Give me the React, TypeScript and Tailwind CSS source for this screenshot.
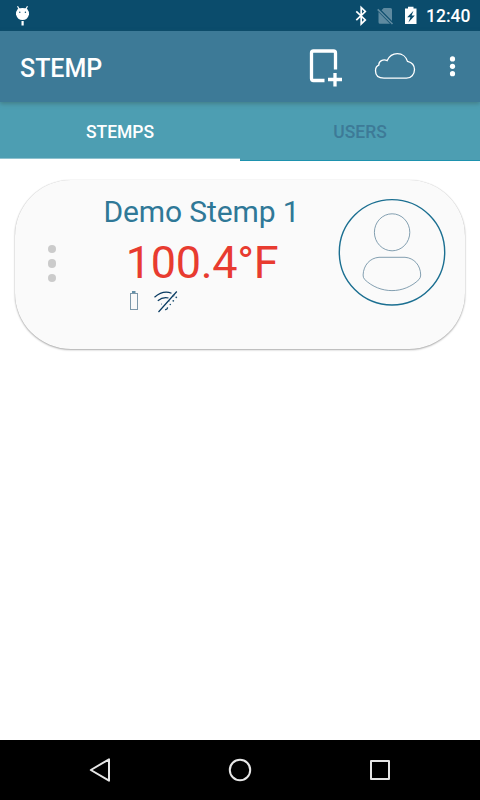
import React from "react";

function StatusBar() {
  return (
    <div className="flex h-[31px] items-center bg-[#0b4c6c]">
      <svg className="ml-[15px]" width="15" height="31" viewBox="15 0 15 31" fill="#fff">
        <path d="M17.500 6.300l1.800 3M27.500 6.300l-1.800 3" stroke="#fff" strokeWidth="1.200" />
        <path d="M18 8.600q4.500-1.300 9 0q2.300 3 2 6q-1.500 5.500-6.500 5.500t-6.500-5.500q-.3-3 2-6z" />
        <rect x="21.500" y="21" width="2.200" height="4.500" />
        <circle cx="19.800" cy="12.300" r=".7" fill="#0b4c6c" />
        <circle cx="25.400" cy="12.300" r=".7" fill="#0b4c6c" />
      </svg>
      <svg className="ml-auto" width="80" height="31" viewBox="350 0 80 31" fill="none">
        <path d="M356.300 11.300l9 8.600-4.100 4V7.500l4.100 4-9 8.600" stroke="#fff" strokeWidth="1.700" />
        <path d="M381.500 10.200L383.700 8H390.500q1.500 0 1.500 1.500V21zM378.500 12L390 23.700H380q-1.500 0-1.500-1.500z" fill="#5e8aa0" />
        <path d="M377.700 9.300l14.800 14.700" stroke="#5e8aa0" strokeWidth="1.700" />
        <path d="M405 8.500h3V6.700h5.500v1.800h3V24H405z" fill="#fff" />
        <path d="M413.500 10.800l-6.300 6.400h3.200l-2 5.300 6.400-7h-3.200z" fill="#0b4c6c" />
      </svg>
      <span className="-ml-[4px] w-[54px] whitespace-nowrap pt-[2px] text-[17.5px] font-medium leading-[31px] text-white">12:40</span>
    </div>
  );
}

function AppBar() {
  return (
    <header className="relative z-10 flex h-[71px] items-center bg-[#3d7a97] pl-5 shadow-[0_2px_4px_rgba(60,100,100,0.5)]">
      <h1 className="pt-[3px] text-[25px] font-medium leading-none text-white">STEMP</h1>
      <svg className="ml-auto" width="180" height="71" viewBox="300 31 180 71" fill="none">
        <path d="M324.500 80.500H313.500q-2 0-2-2V53q0-2 2-2H333.500q2 0 2 2V69.500" stroke="#fff" strokeWidth="3.300" />
        <path d="M335 73v13.500M328 79.500h14" stroke="#fff" strokeWidth="3.300" />
        <path d="M384 78.200C378.500 78.200 375.500 75.200 375.500 70.800C375.500 67.600 376.800 65.900 378.800 65.100C378.700 61.200 383 58.700 387.200 60.600C389.300 56 393 53.700 397.300 53.700C402.400 53.700 406.300 57 407.500 61.400C412 62.500 414.500 65.700 414.500 69.600C414.500 74.500 411 78.200 406.500 78.200Z" stroke="#fff" strokeWidth="1.300" />
        <g fill="#fff">
          <circle cx="452.500" cy="58.900" r="2.600" />
          <circle cx="452.500" cy="66.300" r="2.600" />
          <circle cx="452.500" cy="73.700" r="2.600" />
        </g>
      </svg>
    </header>
  );
}

function Tabs() {
  return (
    <nav className="flex h-[59px] text-center text-[17.5px] font-medium leading-[60px]">
      <div className="h-[57px] flex-1 border-b border-[#8fc1ce] bg-[#4d9eb2] text-white">STEMPS</div>
      <div className="h-[59px] flex-1 border-b border-[#1e92ae] bg-[#4d9eb2] text-[#3d7a97]">USERS</div>
    </nav>
  );
}

function Avatar() {
  return (
    <svg width="108" height="108" viewBox="338 198 108 108" fill="none">
      <circle cx="392" cy="252.300" r="52.700" stroke="#1b6f91" strokeWidth="1.400" />
      <g stroke="#64889d" strokeWidth=".8">
        <ellipse cx="392.100" cy="232.300" rx="17.700" ry="18.500" />
        <path d="M379 257.300H405C414 258 420.500 265 420.700 275Q420.700 277.500 419 279.500C404 294.300 380 294.300 364.700 279.500Q363 277.500 363.100 275C363.500 265 370 258 379 257.300Z" />
      </g>
    </svg>
  );
}

function StatusIcons() {
  return (
    <svg width="54" height="24" viewBox="126 290 54 24" fill="none">
      <path d="M132 292h3.500" stroke="#316d8c" strokeWidth="1.500" />
      <rect x="130.500" y="293.500" width="7" height="16" stroke="#7d98aa" strokeWidth="1" />
      <g stroke="#083a61" strokeWidth="1.200">
        <path d="M154.500 297.300Q163 289.800 171.500 293.200M157.800 300.800Q163 296.500 168.500 298M176.800 291.500L158.500 312" />
      </g>
      <g fill="#245475">
        <circle cx="176.300" cy="297.300" r=".9" />
        <circle cx="173.500" cy="295.500" r=".9" />
        <circle cx="173.300" cy="300.800" r=".9" />
        <circle cx="170.300" cy="304.500" r=".8" />
        <circle cx="169" cy="301" r=".6" />
        <circle cx="161.500" cy="304" r=".5" />
      </g>
      <path d="M165 309.500q2.600.3 2.500-2.300" stroke="#245475" strokeWidth="1.300" />
    </svg>
  );
}

function StempCard() {
  return (
    <section className="mx-[15px] mt-[19px] flex h-[169px] rounded-[56px] bg-[#fafafa] shadow-[0_1px_2px_rgba(0,0,0,0.32),0_0_1px_rgba(0,0,0,0.2)]">
      <div className="ml-[32.5px] mt-[64.5px] flex w-[9px] shrink-0 flex-col gap-[6px]">
        <i className="h-[8.5px] w-[8.5px] rounded-full bg-[#cbcbcb]" />
        <i className="h-[8.5px] w-[8.5px] rounded-full bg-[#cbcbcb]" />
        <i className="h-[8.5px] w-[8.5px] rounded-full bg-[#cbcbcb]" />
      </div>
      <div className="ml-[31.5px] flex w-[226px] flex-col whitespace-nowrap">
        <div className="mt-[14px] pl-[1px] text-center text-[30px] leading-[36px] tracking-[-0.1px] text-[#2f7897]">Demo Stemp 1</div>
        <div className="mt-[6px] pl-[2px] text-center text-[45px] leading-[54px] tracking-[-0.3px] text-[#e83b30]">100.4°F</div>
        <div className="ml-[38px]"><StatusIcons /></div>
      </div>
      <div className="ml-[24px] mt-[18px]"><Avatar /></div>
    </section>
  );
}

function NavBar() {
  return (
    <footer className="h-[60px] bg-black">
      <svg width="480" height="60" viewBox="0 740 480 60" fill="none" stroke="#e6e6e6" strokeWidth="2" strokeLinejoin="round">
        <path d="M90.800 770L109 759.300V780.700Z" />
        <circle cx="240" cy="770" r="10.200" />
        <rect x="371" y="761" width="18" height="18" />
      </svg>
    </footer>
  );
}

export default function App() {
  return (
    <div className="flex h-[800px] w-[480px] flex-col overflow-hidden bg-white font-['Roboto',sans-serif]">
      <StatusBar />
      <AppBar />
      <Tabs />
      <main className="flex-1">
        <StempCard />
      </main>
      <NavBar />
    </div>
  );
}
